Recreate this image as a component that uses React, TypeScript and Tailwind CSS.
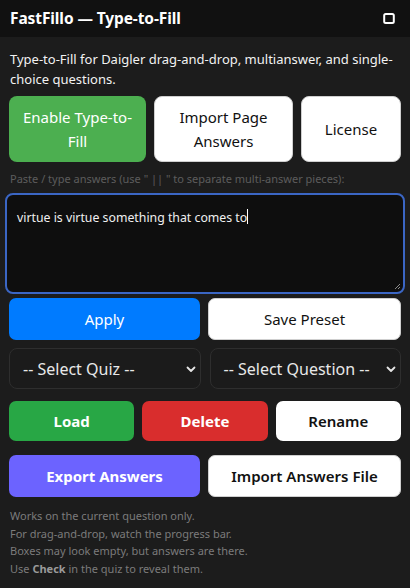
import React from 'react'

const font = { fontFamily: '"Noto Sans", "Open Sans", sans-serif' }

function Chevron() {
  return (
    <svg width="10" height="10" viewBox="0 0 10 10" className="shrink-0">
      <path d="M1.5 3.5 L5 7 L8.5 3.5" fill="none" stroke="#e5e5e5" strokeWidth="1.8" strokeLinecap="round" strokeLinejoin="round" />
    </svg>
  )
}

function SelectBox({ label }: { label: string }) {
  return (
    <div className="flex-1 h-[41px] flex items-center justify-between pl-[13px] pr-[4px] rounded-[8px] border border-[#2e2e2e] bg-[#1b1b1b] text-[16px] text-[#e8e8e8]">
      <span>{label}</span>
      <Chevron />
    </div>
  )
}

export default function App() {
  return (
    <div className="w-[410px] h-[588px] bg-[#1c1c1c] text-white overflow-hidden" style={font}>
      <div className="h-[37px] bg-[#111111] flex items-center justify-between pl-[10px] pr-[15px]">
        <span className="text-[15.5px] font-bold tracking-[-0.1px]">FastFillo — Type-to-Fill</span>
        <svg width="12" height="11" viewBox="0 0 12 11">
          <rect x="1.2" y="1" width="9.6" height="9" rx="1.5" fill="none" stroke="#fff" strokeWidth="2" />
        </svg>
      </div>

      <div className="px-[9px] pt-[12px]">
        <p className="text-[13px] leading-[20px] text-[#f2f2f2] pl-[1px]">
          Type-to-Fill for Daigler drag-and-drop, multianswer, and single-choice questions.
        </p>

        <div className="flex gap-[8px] mt-[7px]">
          <button className="w-[137px] h-[66px] rounded-[8px] bg-[#4caf50] text-white text-[15px] leading-[24px] px-[8px]">
            Enable Type-to-Fill
          </button>
          <button className="w-[139px] h-[66px] rounded-[8px] bg-white border border-[#cfcfcf] text-[#111] text-[15px] leading-[24px] px-[10px]">
            Import Page Answers
          </button>
          <button className="flex-1 h-[66px] rounded-[8px] bg-white border border-[#cfcfcf] text-[#111] text-[15px]">
            License
          </button>
        </div>

        <div className="text-[11px] text-[#5c5c5c] mt-[9px] pl-[1px] leading-[16px]">
          Paste / type answers (use " || " to separate multi-answer pieces):
        </div>

        <div className="-mx-[4px] mt-[6px] h-[101px] rounded-[8px] border-2 border-[#3b66c4] bg-[#0e0e0e] relative px-[10px] pt-[9px]">
          <span className="text-[12.3px] text-[#f0f0f0]">virtue is virtue something that comes to</span>
          <span className="inline-block w-px h-[15px] bg-white align-middle -mt-[2px]" />
          <svg width="8" height="8" viewBox="0 0 8 8" className="absolute right-[2px] bottom-[2px]">
            <path d="M7 2 L2 7 M7 5 L5 7" stroke="#8a8a8a" strokeWidth="1" />
          </svg>
        </div>

        <div className="flex gap-[8px] mt-[4px]">
          <button className="flex-1 h-[42px] rounded-[7px] bg-[#007bff] text-white text-[15px]">Apply</button>
          <button className="flex-1 h-[42px] rounded-[7px] bg-white border border-[#cfcfcf] text-[#111] text-[15px]">Save Preset</button>
        </div>

        <div className="flex gap-[9px] mt-[8px]">
          <SelectBox label="-- Select Quiz --" />
          <SelectBox label="-- Select Question --" />
        </div>

        <div className="flex gap-[8px] mt-[12px]">
          <button className="flex-1 h-[40px] rounded-[7px] bg-[#28a745] text-white text-[15px] font-bold">Load</button>
          <button className="flex-1 h-[40px] rounded-[7px] bg-[#d92d2d] text-white text-[15px] font-bold">Delete</button>
          <button className="flex-1 h-[40px] rounded-[7px] bg-white text-[#111] text-[15px] font-semibold">Rename</button>
        </div>

        <div className="flex gap-[8px] mt-[14px]">
          <button className="flex-1 h-[42px] rounded-[7px] bg-[#6c63ff] text-white text-[15px] font-bold">Export Answers</button>
          <button className="flex-1 h-[42px] rounded-[7px] bg-white border border-[#cfcfcf] text-[#111] text-[15px] font-semibold">Import Answers File</button>
        </div>

        <div className="mt-[10px] pl-[1px] text-[11px] leading-[17.7px] text-[#7b7b7b]">
          <div>Works on the current question only.</div>
          <div>For drag-and-drop, watch the progress bar.</div>
          <div>Boxes may look empty, but answers are there.</div>
          <div>
            Use <b className="text-[#9a9a9a]">Check</b> in the quiz to reveal them.
          </div>
        </div>
      </div>
    </div>
  )
}
